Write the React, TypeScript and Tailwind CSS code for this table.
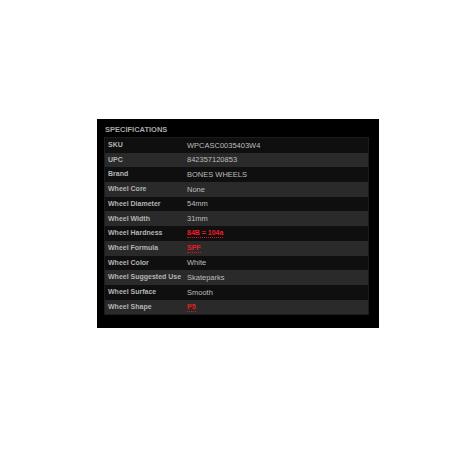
const specs: { label: string; value: string; red?: boolean }[] = [
  { label: "SKU", value: "WPCASC0035403W4" },
  { label: "UPC", value: "842357120853" },
  { label: "Brand", value: "BONES WHEELS" },
  { label: "Wheel Core", value: "None" },
  { label: "Wheel Diameter", value: "54mm" },
  { label: "Wheel Width", value: "31mm" },
  { label: "Wheel Hardness", value: "84B = 104a", red: true },
  { label: "Wheel Formula", value: "SPF", red: true },
  { label: "Wheel Color", value: "White" },
  { label: "Wheel Suggested Use", value: "Skateparks" },
  { label: "Wheel Surface", value: "Smooth" },
  { label: "Wheel Shape", value: "P5", red: true },
];

export default function App() {
  return (
    <div className="h-[460px] w-[460px] bg-white pl-[97px] pt-[119px] font-['Liberation_Sans',Arial,sans-serif]">
      <div className="h-[209px] w-[282px] bg-black pl-[7px] pr-[10px] pt-[4px]">
        <h2 className="h-[14px] pl-[1px] text-[7.5px] font-bold leading-[14px] text-[#a8a8a8]">
          SPECIFICATIONS
        </h2>
        <div className="border border-[#1c1c1c]">
          {specs.map((s, i) => (
            <div
              key={s.label}
              className={`flex h-[14.7px] items-center ${
                i % 2 === 0 ? "bg-[#0f0f0f]" : "bg-[#2a2a2a]"
              }`}
            >
              <div className="w-[82px] shrink-0 pl-[3px] text-[7px] font-bold text-[#b4b4b4]">
                {s.label}
              </div>
              {s.red ? (
                <span className="border-b border-dotted border-[#e0101a] text-[7px] font-bold leading-[9px] text-[#ee1c24]">
                  {s.value}
                </span>
              ) : (
                <span className="text-[7.5px] text-[#bdbdbd]">{s.value}</span>
              )}
            </div>
          ))}
        </div>
      </div>
    </div>
  );
}
